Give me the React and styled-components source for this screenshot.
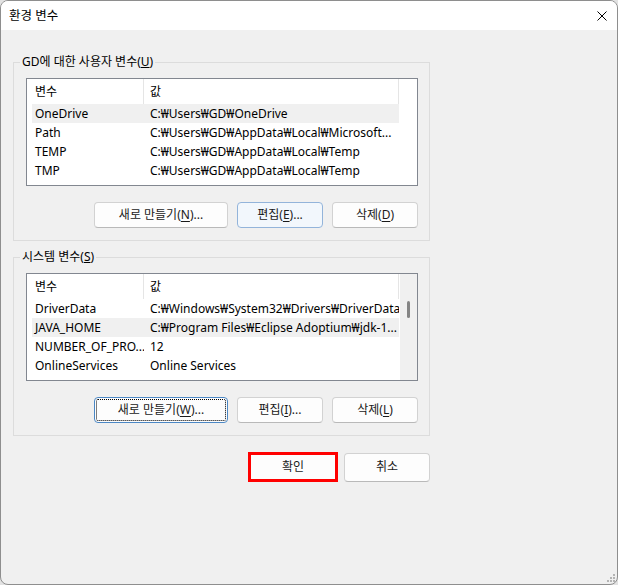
import React from "react"
import styled, { createGlobalStyle, css } from "styled-components"

const GlobalStyle = createGlobalStyle`
  html, body {
    margin: 0;
    padding: 0;
    background: #e2e2e2;
  }
  body {
    font-family: "Segoe UI", "Noto Sans", "Noto Sans CJK KR", sans-serif;
    font-size: 12px;
    color: #000;
  }
`

const userVars = [
  { name: "OneDrive", value: "C:₩Users₩GD₩OneDrive", selected: true },
  { name: "Path", value: "C:₩Users₩GD₩AppData₩Local₩Microsoft..." },
  { name: "TEMP", value: "C:₩Users₩GD₩AppData₩Local₩Temp" },
  { name: "TMP", value: "C:₩Users₩GD₩AppData₩Local₩Temp" },
]

const systemVars = [
  { name: "DriverData", value: "C:₩Windows₩System32₩Drivers₩DriverData" },
  { name: "JAVA_HOME", value: "C:₩Program Files₩Eclipse Adoptium₩jdk-1...", selected: true },
  { name: "NUMBER_OF_PRO...", value: "12" },
  { name: "OnlineServices", value: "Online Services" },
]

export default function App() {
  return (
    <>
      <GlobalStyle />
      <Window>
        <TitleBar>
          <Title>환경 변수</Title>
          <CloseIcon width="10" height="10" viewBox="0 0 10 10">
            <path d="M0.5 0.5 L9.5 9.5 M9.5 0.5 L0.5 9.5" stroke="#000" strokeWidth="1" fill="none" />
          </CloseIcon>
        </TitleBar>

        <Content>
          <Group>
            <Legend>GD에 대한 사용자 변수(<u>U</u>)</Legend>
            <VarList rows={userVars} />
            <ButtonRow>
              <Button $wide>새로 만들기(<u>N</u>)...</Button>
              <Button $state="hover">편집(<u>E</u>)...</Button>
              <Button>삭제(<u>D</u>)</Button>
            </ButtonRow>
          </Group>

          <Group $second>
            <Legend>시스템 변수(<u>S</u>)</Legend>
            <VarList rows={systemVars} scroll />
            <ButtonRow>
              <Button $wide $state="focus">새로 만들기(<u>W</u>)...</Button>
              <Button>편집(<u>I</u>)...</Button>
              <Button>삭제(<u>L</u>)</Button>
            </ButtonRow>
          </Group>

          <Footer>
            <Button $marked>확인</Button>
            <Button $footer>취소</Button>
          </Footer>
        </Content>

        <Grip width="9" height="9" viewBox="0 0 9 9">
          <rect x="7" y="1" width="2" height="2" fill="#b4b4b4" />
          <rect x="4" y="4" width="2" height="2" fill="#b4b4b4" />
          <rect x="7" y="4" width="2" height="2" fill="#b4b4b4" />
          <rect x="1" y="7" width="2" height="2" fill="#b4b4b4" />
          <rect x="4" y="7" width="2" height="2" fill="#b4b4b4" />
          <rect x="7" y="7" width="2" height="2" fill="#b4b4b4" />
        </Grip>
      </Window>
    </>
  )
}

function VarList({ rows, scroll }) {
  return (
    <ListBox>
      <Table>
        <Header>
          <HeadCell>변수</HeadCell>
          <HeadCell $last>값</HeadCell>
        </Header>
        {rows.map(r => (
          <Row key={r.name} $selected={r.selected}>
            <NameCell>{r.name}</NameCell>
            <ValueCell>{r.value}</ValueCell>
          </Row>
        ))}
      </Table>
      {scroll ? (
        <Track>
          <Thumb />
        </Track>
      ) : (
        <Spacer />
      )}
    </ListBox>
  )
}

const Window = styled.div`
  position: relative;
  width: 618px;
  height: 585px;
  box-sizing: border-box;
  border: 1px solid #8e8e8e;
  border-radius: 8px;
  overflow: hidden;
  background: #f0f0f0;
  display: flex;
  flex-direction: column;
`

const TitleBar = styled.div`
  height: 29px;
  flex-shrink: 0;
  background: #fff;
  display: flex;
  align-items: center;
  justify-content: space-between;
  padding: 0 10px 0 8px;
`

const Title = styled.span`
  font-size: 12.5px;
  line-height: 16px;
`

const CloseIcon = styled.svg`
  display: block;
`

const Content = styled.div`
  padding: 24px 0 0 12px;
  display: flex;
  flex-direction: column;
`

const Group = styled.fieldset`
  width: 417px;
  box-sizing: border-box;
  margin: ${p => (p.$second ? "8px" : "0")} 0 0 0;
  border: 1px solid #dcdcdc;
  padding: 8px 11px 12px 12px;
  min-width: 0;
`

const Legend = styled.legend`
  padding: 0 2px;
  margin-left: -6px;
  font-size: 12px;
  line-height: 16px;
  color: #000;
`

const ListBox = styled.div`
  height: 108px;
  box-sizing: border-box;
  border: 1px solid #828790;
  background: #fff;
  display: flex;
  overflow: hidden;
`

const Table = styled.div`
  width: 372px;
  flex-shrink: 0;
  display: flex;
  flex-direction: column;
`

const Header = styled.div`
  height: 25px;
  flex-shrink: 0;
  display: grid;
  grid-template-columns: 117px 255px;
`

const HeadCell = styled.div`
  display: flex;
  align-items: center;
  padding-left: ${p => (p.$last ? "6px" : "8px")};
  border-right: 1px solid #e5e5e5;
  line-height: 16px;
`

const Row = styled.div`
  height: 19px;
  flex-shrink: 0;
  margin-left: 5px;
  display: grid;
  grid-template-columns: 112px 255px;
  align-items: center;
  background: ${p => (p.$selected ? "#f0f0f0" : "transparent")};
  line-height: 16px;
`

const NameCell = styled.span`
  padding-left: 3px;
  white-space: nowrap;
  overflow: hidden;
  color: #000;
`

const ValueCell = styled.span`
  padding-left: 6px;
  white-space: nowrap;
  overflow: hidden;
  color: #000;
`

const Track = styled.div`
  flex: 1;
  background: #f0f0f0;
  border-left: 1px solid #fff;
  display: flex;
  justify-content: center;
  padding-top: 27px;
`

const Thumb = styled.div`
  width: 3px;
  height: 17px;
  border-radius: 2px;
  background: #858585;
`

const Spacer = styled.div`
  flex: 1;
`

const ButtonRow = styled.div`
  margin-top: 16px;
  display: flex;
  justify-content: flex-end;
  gap: 9px;
`

const Button = styled.button`
  height: 26px;
  width: ${p => (p.$wide ? "134px" : "86px")};
  box-sizing: border-box;
  font-family: inherit;
  font-size: 12px;
  line-height: 16px;
  color: #1a1a1a;
  background: #fdfdfd;
  border: 1px solid #d2d2d2;
  border-bottom-color: #b9b9b9;
  border-radius: 4px;
  padding: 0;
  cursor: default;

  u {
    text-underline-offset: 2px;
  }

  ${p =>
    p.$state === "hover" &&
    css`
      background: #f2f7fc;
      border-color: #93b4da;
    `}

  ${p =>
    p.$state === "focus" &&
    css`
      border-color: #4b87c4;
      outline: 1px dotted #000;
      outline-offset: -3px;
    `}

  ${p =>
    p.$marked &&
    css`
      width: 90px;
      height: 30px;
      border: 3px solid #ff0000;
      border-radius: 0;
    `}

  ${p =>
    p.$footer &&
    css`
      height: 29px;
    `}
`

const Footer = styled.div`
  width: 417px;
  margin-top: 16px;
  display: flex;
  justify-content: flex-end;
  align-items: center;
  gap: 6px;
`

const Grip = styled.svg`
  position: absolute;
  right: 2px;
  bottom: 2px;
`
